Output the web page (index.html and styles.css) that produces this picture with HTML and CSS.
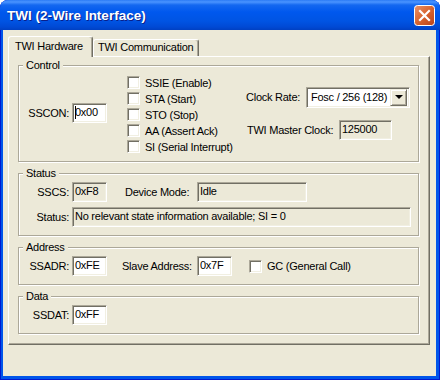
FILE: index.html
```html
<!DOCTYPE html>
<html lang="en">
<head>
    <meta charset="UTF-8">
    <title>TWI (2-Wire Interface)</title>
    <link rel="stylesheet" href="styles.css">
</head>
<body>
    <div class="window">
        <div class="titlebar">
            <span class="title">TWI (2-Wire Interface)</span>
            <span class="close-btn">
                <svg width="21" height="21" viewBox="0 0 21 21">
                    <defs>
                        <linearGradient id="cg" x1="0" y1="0" x2="1" y2="1">
                            <stop offset="0" stop-color="#E9936B"/>
                            <stop offset="0.5" stop-color="#D9642F"/>
                            <stop offset="1" stop-color="#B8421B"/>
                        </linearGradient>
                    </defs>
                    <rect x="0.5" y="0.5" width="20" height="20" rx="3" fill="url(#cg)" stroke="#fff"/>
                    <path d="M6 6 L15 15 M15 6 L6 15" stroke="#fff" stroke-width="2.2" stroke-linecap="square"/>
                </svg>
            </span>
        </div>
        <div class="client">
            <div class="tabs">
                <div class="tab active">TWI Hardware</div>
                <div class="tab second">TWI Communication</div>
            </div>
            <div class="panel">
                <div class="group control">
                    <span class="group-title">Control</span>
                    <div class="row sscon">
                        <span class="lbl">SSCON:</span>
                        <span class="edit"><span class="caret"></span>0x00</span>
                    </div>
                    <div class="checks">
                        <div class="check-row"><span class="check"></span>SSIE (Enable)</div>
                        <div class="check-row"><span class="check"></span>STA (Start)</div>
                        <div class="check-row"><span class="check"></span>STO (Stop)</div>
                        <div class="check-row"><span class="check"></span>AA (Assert Ack)</div>
                        <div class="check-row"><span class="check"></span>SI (Serial Interrupt)</div>
                    </div>
                    <div class="clock">
                        <div class="row">
                            <span class="lbl-left rate-lbl">Clock Rate:</span>
                            <span class="select">
                                <span class="select-text">Fosc / 256 (128)</span>
                                <span class="drop-btn"></span>
                            </span>
                        </div>
                        <div class="row">
                            <span class="lbl-left master-lbl">TWI Master Clock:</span>
                            <span class="edit readonly master">125000</span>
                        </div>
                    </div>
                </div>

                <div class="group status">
                    <span class="group-title">Status</span>
                    <div class="row">
                        <span class="lbl">SSCS:</span>
                        <span class="edit readonly">0xF8</span>
                        <span class="lbl-left mode-lbl">Device Mode:</span>
                        <span class="edit readonly mode">Idle</span>
                    </div>
                    <div class="row">
                        <span class="lbl">Status:</span>
                        <span class="edit readonly wide">No relevant state information available; SI = 0</span>
                    </div>
                </div>

                <div class="group">
                    <span class="group-title">Address</span>
                    <div class="row">
                        <span class="lbl">SSADR:</span>
                        <span class="edit">0xFE</span>
                        <span class="lbl-left slave-lbl">Slave Address:</span>
                        <span class="edit">0x7F</span>
                        <div class="check-row gc"><span class="check"></span>GC (General Call)</div>
                    </div>
                </div>

                <div class="group">
                    <span class="group-title">Data</span>
                    <div class="row">
                        <span class="lbl">SSDAT:</span>
                        <span class="edit">0xFF</span>
                    </div>
                </div>
            </div>
        </div>
    </div>
</body>
</html>
```

FILE: styles.css
```css
body {
    margin: 0;
    background: #ffffff;
    font-family: 'Liberation Sans', Arial, sans-serif;
    font-size: 11px;
    letter-spacing: -0.25px;
    color: #000000;
}
.window {
    width: 440px;
    height: 380px;
    box-sizing: border-box;
    display: flex;
    flex-direction: column;
    padding-bottom: 4px;
    background: #0055EA;
    border-radius: 8px 8px 0 0;
    box-shadow: inset 1px 0 0 #0019CF, inset -1px 0 0 #0019CF, inset 0 -1px 0 #0019CF;
}
.titlebar {
    height: 30px;
    flex: 0 0 30px;
    display: flex;
    align-items: center;
    justify-content: space-between;
    padding: 0 5px 0 7px;
    border-radius: 8px 8px 0 0;
    background: linear-gradient(to bottom, #2C7BF5 0, #4A94FF 2px, #1468F0 5px, #0058EE 12px, #0054E3 70%, #0049D4 90%, #0040C2 100%);
}
.title {
    color: #ffffff;
    font-weight: bold;
    font-size: 13.5px;
    letter-spacing: 0;
    text-shadow: 1px 1px 0 #0A1F8A;
    margin-top: 1px;
}
.close-btn {
    width: 21px;
    height: 21px;
    display: block;
    margin-top: 1px;
}
.close-btn svg {
    display: block;
}
.client {
    flex: 1;
    margin: 0 4px 0 3px;
    background: #ECE9D8;
    padding: 6px 6px 0 5px;
}

/* tabs */
.tabs {
    display: flex;
    align-items: flex-end;
    height: 20px;
}
.tab {
    box-sizing: border-box;
    height: 17px;
    line-height: 15px;
    padding: 0 4px;
    border: 1px solid #ffffff;
    border-bottom: none;
    border-right-color: #716F64;
    border-radius: 3px 3px 0 0;
    box-shadow: inset -1px 0 0 #ACA899;
    background: #ECE9D8;
    white-space: nowrap;
}
.tab.second {
    width: 106px;
}
.tab.active {
    height: 21px;
    line-height: 19px;
    width: 85px;
    padding: 0 6px;
    margin-bottom: -1px;
    position: relative;
    z-index: 1;
}
.panel {
    height: 289px;
    box-sizing: border-box;
    border: 1px solid #ffffff;
    border-right-color: #716F64;
    border-bottom-color: #716F64;
    box-shadow: inset -1px -1px 0 #ACA899;
    padding: 8px 10px 0 9px;
    display: flex;
    flex-direction: column;
    gap: 11px;
}

/* group boxes */
.group {
    position: relative;
    border: 1px solid #ACA899;
    box-shadow: 1px 1px 0 #ffffff, inset 1px 1px 0 #ffffff;
    padding: 8px 0 8px 0;
    display: flex;
    flex-direction: column;
    gap: 5px;
}
.group-title {
    position: absolute;
    top: -7px;
    left: 4px;
    padding: 0 3px;
    line-height: 13px;
    background: #ECE9D8;
}
.row {
    display: flex;
    align-items: center;
}
.lbl {
    width: 50px;
    margin-right: 3px;
    text-align: right;
    white-space: nowrap;
}
.lbl-left {
    white-space: nowrap;
}
.edit {
    box-sizing: border-box;
    width: 35px;
    height: 20px;
    line-height: 16px;
    padding-left: 2px;
    border: 1px solid;
    border-color: #ACA899 #ffffff #ffffff #ACA899;
    box-shadow: inset 1px 1px 0 #716F64, inset -1px -1px 0 #F1EFE2;
    background: #ffffff;
    white-space: nowrap;
    overflow: hidden;
}
.edit.readonly {
    background: #ECE9D8;
}
.caret {
    display: inline-block;
    width: 1px;
    height: 13px;
    background: #000000;
    vertical-align: -3px;
    margin-right: -1px;
}

/* control group */
.group.control {
    flex-direction: row;
    align-items: center;
    gap: 0;
    padding: 10px 0 8px 0;
}
.sscon {
    flex: 0 0 108px;
    margin-bottom: 3px;
}
.checks {
    flex: 0 0 119px;
    display: flex;
    flex-direction: column;
    gap: 3px;
}
.check-row {
    display: flex;
    align-items: center;
    height: 13px;
    white-space: nowrap;
}
.check {
    box-sizing: border-box;
    width: 13px;
    height: 13px;
    margin-right: 5px;
    border: 1px solid;
    border-color: #ACA899 #ffffff #ffffff #ACA899;
    box-shadow: inset 1px 1px 0 #716F64, inset -1px -1px 0 #F1EFE2;
    background: #ffffff;
}
.clock {
    display: flex;
    flex-direction: column;
    gap: 12px;
    margin-bottom: 3px;
}
.rate-lbl {
    width: 60px;
}
.master-lbl {
    width: 92px;
    margin-left: 1px;
}
.select {
    box-sizing: border-box;
    width: 104px;
    height: 21px;
    display: flex;
    align-items: center;
    justify-content: space-between;
    padding: 2px;
    border: 1px solid;
    border-color: #ACA899 #ffffff #ffffff #ACA899;
    box-shadow: inset 1px 1px 0 #716F64, inset -1px -1px 0 #F1EFE2;
    background: #ffffff;
}
.select-text {
    padding-left: 2px;
    white-space: nowrap;
}
.drop-btn {
    box-sizing: border-box;
    width: 17px;
    height: 17px;
    display: flex;
    align-items: center;
    justify-content: center;
    border: 1px solid;
    border-color: #F1EFE2 #716F64 #716F64 #F1EFE2;
    box-shadow: inset 1px 1px 0 #ffffff, inset -1px -1px 0 #ACA899;
    background: #ECE9D8;
}
.drop-btn::after {
    content: "";
    width: 0;
    height: 0;
    border-left: 4px solid transparent;
    border-right: 4px solid transparent;
    border-top: 4px solid #000000;
}
.master {
    width: 53px;
}

/* status group */
.mode-lbl {
    width: 72px;
    margin-left: 18px;
}
.mode {
    width: 110px;
}
.wide {
    width: 339px;
}

/* address group */
.slave-lbl {
    width: 75px;
    margin-left: 15px;
}
.gc {
    margin-left: 17px;
}
```
